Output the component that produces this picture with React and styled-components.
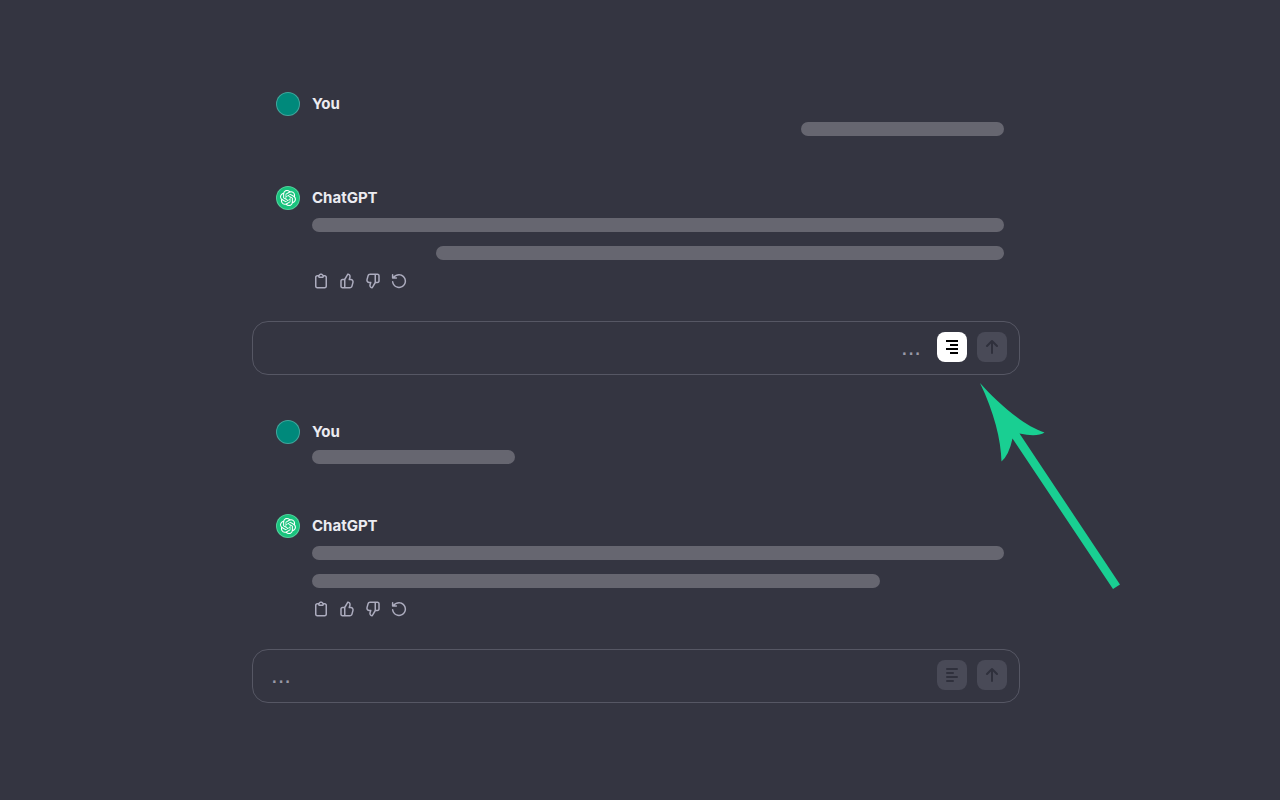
import styled, { createGlobalStyle, css } from "styled-components";
import { SiOpenai } from "react-icons/si";

const colors = {
    page: "#343541",
    text: "#ececf1",
    muted: "#acacbe",
    placeholder: "#9a9aa8",
    bar: "#666670",
    border: "#565764",
    user: "#00897b",
    bot: "#19c37d",
    disabled: "#494a57",
    disabledIcon: "#2f303c",
    arrow: "#19cf92"
};

const GlobalStyle = createGlobalStyle`
    * {
        box-sizing: border-box;
    }
    body {
        margin: 0;
        background-color: ${colors.page};
        color: ${colors.text};
        font-family: Inter, "Liberation Sans", sans-serif;
    }
`;

const Page = styled.main`
    min-height: 100vh;
    padding: 92px 8px 92px 0;
    overflow: hidden;
`;

const Column = styled.div`
    position: relative;
    display: flex;
    flex-direction: column;
    gap: 45px;
    max-width: 768px;
    margin: 0 auto;
`;

const Conversation = styled.section`
    display: flex;
    flex-direction: column;
`;

const Message = styled.article`
    display: flex;
    gap: 12px;
    padding: 0 16px 0 24px;
    margin-bottom: ${(props) => (props.$from === "user" ? 50 : 31)}px;
`;

const Avatar = styled.div`
    display: flex;
    align-items: center;
    justify-content: center;
    flex-shrink: 0;
    width: 24px;
    height: 24px;
    border: 1px solid rgba(255, 255, 255, 0.25);
    border-radius: 50%;
    color: white;
    background-color: ${(props) => colors[props.$from]};
`;

const MessageBody = styled.div`
    flex: 1;
    min-width: 0;
`;

const Author = styled.h2`
    margin: 0;
    font-size: 15px;
    font-weight: 700;
    line-height: 24px;
`;

const Lines = styled.div`
    display: flex;
    flex-direction: column;
    align-items: ${(props) => (props.$rtl ? "flex-end" : "flex-start")};
    gap: 14px;
    padding-top: ${(props) => (props.$from === "user" ? 6 : 8)}px;
`;

const Line = styled.div`
    width: 100%;
    max-width: ${(props) => props.$width}px;
    height: 14px;
    border-radius: 7px;
    background-color: ${colors.bar};
`;

const Actions = styled.div`
    display: flex;
    gap: 8px;
    padding-top: 12px;
`;

const ActionButton = styled.button`
    display: flex;
    padding: 0;
    border: 0;
    background: none;
    color: ${colors.muted};
    cursor: pointer;
`;

const Composer = styled.form`
    display: flex;
    gap: 10px;
    height: 54px;
    padding: 10px 12px 10px 18px;
    border: 1px solid ${colors.border};
    border-radius: 16px;
`;

const Prompt = styled.input`
    flex: 1;
    min-width: 0;
    height: 30px;
    margin-right: 6px;
    padding: 0;
    border: 0;
    outline: 0;
    background: none;
    color: ${colors.text};
    font-family: "Liberation Sans", sans-serif;
    font-size: 24px;
    &::placeholder {
        color: ${colors.placeholder};
        opacity: 1;
    }
`;

const SquareButton = styled.button`
    display: flex;
    align-items: center;
    justify-content: center;
    width: 30px;
    height: 30px;
    padding: 0;
    border: 0;
    border-radius: 8px;
    cursor: pointer;
    ${(props) =>
        props.$active
            ? css`
                  color: black;
                  background-color: white;
              `
            : css`
                  color: ${colors.disabledIcon};
                  background-color: ${colors.disabled};
              `}
`;

const Arrow = styled.svg`
    position: absolute;
    top: 288px;
    left: 724px;
    pointer-events: none;
`;

const thumbPath =
    "M12.1318 2.50389C12.3321 2.15338 12.7235 1.95768 13.124 2.00775L13.5778 2.06447C16.0449 2.37286 17.636 4.83353 16.9048 7.20993L16.354 9H17.0722C19.7097 9 21.6253 11.5079 20.9313 14.0525L19.5677 19.0525C19.0931 20.7927 17.5124 22 15.7086 22H6C4.34315 22 3 20.6569 3 19V12C3 10.3431 4.34315 9 6 9H8C8.25 9 8.4 8.95 8.5 8.8L12.1318 2.50389ZM10 20H15.7086C16.6105 20 17.4008 19.3964 17.6381 18.5262L19.0018 13.5262C19.3488 12.2539 18.391 11 17.0722 11H15C14.6827 11 14.3841 10.8494 14.1956 10.5941C14.0071 10.3388 13.9509 10.0092 14.0442 9.70591L14.9932 6.62175C15.3384 5.49984 14.6484 4.34036 13.5319 4.08468L10.2 9.86C10.07 10.09 10 10.35 10 10.6V20ZM8 11H6C5.44772 11 5 11.4477 5 12V19C5 19.5523 5.44772 20 6 20H8V11Z";

const actions = [
    {
        label: "Copy",
        path: "M12 4C10.8954 4 10 4.89543 10 6H14C14 4.89543 13.1046 4 12 4ZM8.53513 4C9.22675 2.8044 10.5194 2 12 2C13.4806 2 14.7733 2.8044 15.4649 4H17C18.6569 4 20 5.34315 20 7V19C20 20.6569 18.6569 22 17 22H7C5.34315 22 4 20.6569 4 19V7C4 5.34315 5.34315 4 7 4H8.53513ZM8 6H7C6.44772 6 6 6.44772 6 7V19C6 19.5523 6.44772 20 7 20H17C17.5523 20 18 19.5523 18 19V7C18 6.44772 17.5523 6 17 6H16C16 7.10457 15.1046 8 14 8H10C8.89543 8 8 7.10457 8 6Z"
    },
    { label: "Good response", path: thumbPath },
    { label: "Bad response", path: thumbPath, flip: true },
    {
        label: "Regenerate",
        path: "M3.5 2.5C4.05228 2.5 4.5 2.94772 4.5 3.5V5.9C6.3 3.8 8.9 2.5 12 2.5C17.2467 2.5 21.5 6.75329 21.5 12C21.5 17.2467 17.2467 21.5 12 21.5C7.1307 21.5 3.11828 17.8375 2.565 13.1164C2.50071 12.5679 2.89327 12.0711 3.4418 12.0068C3.99033 11.9425 4.48712 12.3351 4.5514 12.8836C4.98798 16.6089 8.15708 19.5 12 19.5C16.1421 19.5 19.5 16.1421 19.5 12C19.5 7.85786 16.1421 4.5 12 4.5C9.7796 4.5 7.7836 5.46469 6.40954 7H8.5C9.05228 7 9.5 7.44772 9.5 8C9.5 8.55228 9.05228 9 8.5 9H3.5C2.94772 9 2.5 8.55228 2.5 8V3.5C2.5 2.94771 2.94771 2.5 3.5 2.5Z"
    }
];

const conversations = [
    { id: "rtl", rtl: true },
    { id: "ltr", rtl: false }
];

function AlignIcon({ rtl }) {
    return (
        <svg width="14" height="16" viewBox="0 0 14 16" fill="none" stroke="currentColor" strokeWidth="2" strokeLinecap={rtl ? "butt" : "round"}>
            {rtl ? (
                <path d="M1 2h12M5 6h8M1 10h12M5 14h8" />
            ) : (
                <path d="M2 2h10M2 6h6M2 10h10M2 14h6" />
            )}
        </svg>
    );
}

function SendIcon() {
    return (
        <svg width="24" height="24" viewBox="0 0 24 24" fill="none" stroke="currentColor" strokeWidth="2" strokeLinecap="round" strokeLinejoin="round">
            <path d="M12 18V6M7 11l5-5 5 5" />
        </svg>
    );
}

function ConversationView({ id, rtl }) {
    return (
        <Conversation>
            <Message $from="user">
                <Avatar $from="user" />
                <MessageBody>
                    <Author>You</Author>
                    <Lines $from="user" $rtl={rtl}>
                        <Line $width={203} />
                    </Lines>
                </MessageBody>
            </Message>
            <Message $from="bot">
                <Avatar $from="bot">
                    <SiOpenai size={16} />
                </Avatar>
                <MessageBody>
                    <Author>ChatGPT</Author>
                    <Lines $from="bot" $rtl={rtl}>
                        <Line $width={692} />
                        <Line $width={568} />
                    </Lines>
                    <Actions>
                        {actions.map((a) => (
                            <ActionButton key={a.label} type="button" aria-label={a.label}>
                                <svg width="18" height="18" viewBox="0 0 24 24" fill="currentColor" fillRule="evenodd">
                                    <path d={a.path} transform={a.flip ? "rotate(180 12 12)" : undefined} />
                                </svg>
                            </ActionButton>
                        ))}
                    </Actions>
                </MessageBody>
            </Message>
            <Composer onSubmit={(e) => e.preventDefault()}>
                <Prompt id={`prompt-${id}`} aria-label="Message" placeholder="..." dir={rtl ? "rtl" : "ltr"} />
                <SquareButton type="button" $active={rtl} aria-label="Text direction" aria-pressed={rtl}>
                    <AlignIcon rtl={rtl} />
                </SquareButton>
                <SquareButton type="submit" aria-label="Send">
                    <SendIcon />
                </SquareButton>
            </Composer>
        </Conversation>
    );
}

function App() {
    return (
        <Page>
            <GlobalStyle />
            <Column>
                {conversations.map((c) => (
                    <ConversationView key={c.id} id={c.id} rtl={c.rtl} />
                ))}
                <Arrow width="148" height="214" viewBox="0 0 148 214" fill={colors.arrow} aria-hidden="true">
                    <path d="M4 3C20 21 47 46 68.500 52.500Q61 57.500 43.500 53.500L144 204.500 137 209 36.500 58.500Q33 75 25.500 81.500C25 60 18 32 4 3Z" />
                </Arrow>
            </Column>
        </Page>
    );
}

export default App;
